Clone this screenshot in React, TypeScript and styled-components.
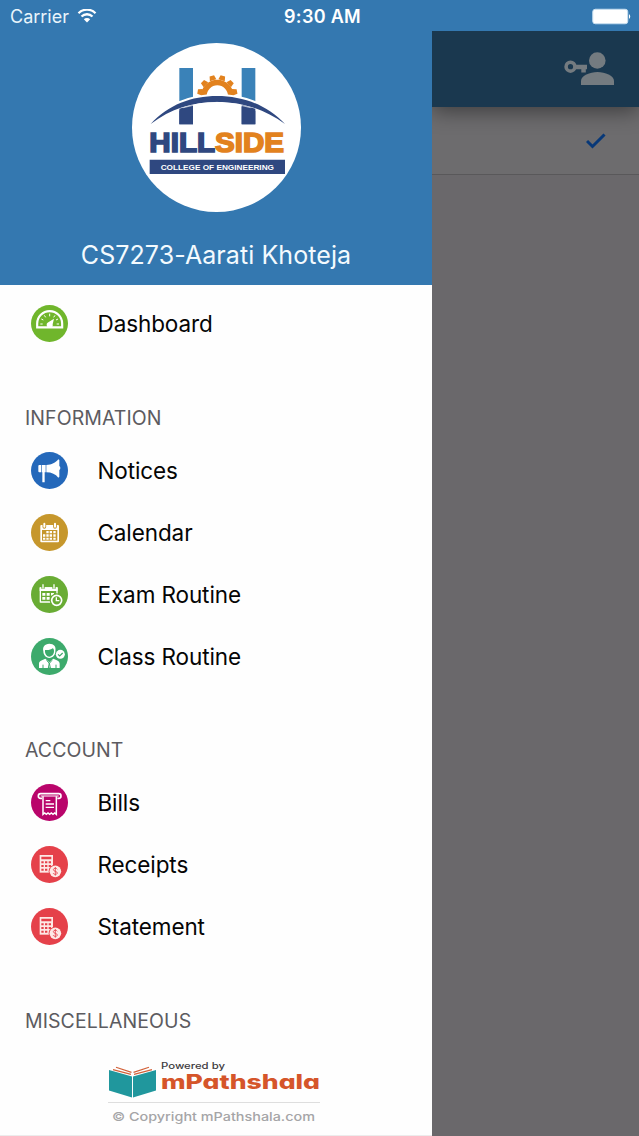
import type { ReactNode } from "react";
import styled, { createGlobalStyle } from "styled-components";

const GlobalStyle = createGlobalStyle`
  * {
    box-sizing: border-box;
  }
  body {
    margin: 0;
    font-family: Inter, "Liberation Sans", sans-serif;
    background-color: #6b696c;
  }
`;

const Screen = styled.div`
  width: 639px;
  height: 1136px;
  display: flex;
  flex-direction: column;
  overflow: hidden;
`;

const StatusBar = styled.header`
  height: 31px;
  flex-shrink: 0;
  display: grid;
  grid-template-columns: 1fr auto 1fr;
  align-items: center;
  padding: 1px 7px 0 10px;
  color: white;
  background-color: #3478b0;
`;
const Carrier = styled.div`
  display: flex;
  align-items: center;
  gap: 8px;
  font-size: 18px;
  color: #e9f5fb;
`;
const Time = styled.div`
  padding-left: 3px;
  font-size: 18px;
  font-weight: 600;
  letter-spacing: 0.3px;
`;
const Battery = styled.svg`
  justify-self: end;
  display: block;
`;

const Body = styled.div`
  flex: 1;
  display: flex;
  min-height: 0;
`;

const Drawer = styled.aside`
  width: 432px;
  display: flex;
  flex-direction: column;
  background-color: #fefefe;
  border-bottom: 1px solid #ececec;
`;
const Profile = styled.div`
  height: 254px;
  flex-shrink: 0;
  display: flex;
  flex-direction: column;
  align-items: center;
  padding-top: 12px;
  background-color: #3478b0;
`;
const UserName = styled.h1`
  margin: 27px 0 0;
  font-size: 25px;
  line-height: 32px;
  font-weight: 400;
  letter-spacing: 0.08px;
  white-space: nowrap;
  color: #f3fafe;
`;

const Menu = styled.nav`
  padding-top: 8px;
`;
const SectionTitle = styled.h2`
  height: 84.7px;
  margin: 0;
  padding: 51px 0 0 25px;
  font-size: 19.5px;
  line-height: 24px;
  font-weight: 400;
  letter-spacing: 0.08px;
  color: #5c5b60;
`;
const Item = styled.div`
  height: 61.9px;
  display: flex;
  align-items: center;
  gap: 29.5px;
  padding-left: 31px;
`;
const Label = styled.span`
  font-size: 22.5px;
  letter-spacing: -0.1px;
  color: #050505;
`;
const Badge = styled.svg`
  width: 37px;
  height: 37px;
  flex-shrink: 0;
`;

const Footer = styled.footer`
  flex: 1;
  padding: 15px 0 0 108px;
`;

const Page = styled.main`
  flex: 1;
  display: flex;
  flex-direction: column;
  background-color: #6a686b;
`;
const Toolbar = styled.div`
  height: 76px;
  display: flex;
  justify-content: flex-end;
  padding: 20px 24px 0 0;
  background-color: #1a384f;
  box-shadow: 0 4px 20px rgba(0, 0, 0, 0.45);
  clip-path: inset(0 0 -40px 0);
  z-index: 1;
`;
const SelectedRow = styled.div`
  height: 68px;
  display: flex;
  justify-content: flex-end;
  align-items: center;
  padding-right: 33px;
  background-color: #6d6c6e;
  border-bottom: 1px solid #59585a;
`;

interface IIcon {
  color: string;
  children: ReactNode;
}

function Icon({ color, children }: IIcon) {
  return (
    <Badge viewBox="0 0 111 111">
      <circle cx="55.5" cy="55.5" r="55.5" fill={color} />
      {children}
    </Badge>
  );
}

const DashboardIcon = () => (
  <Icon color="#70b62c">
    <path
      d="M18.500 67V56a37.500 37.500 0 0 1 75 0v11z"
      fill="none"
      stroke="#fff"
      strokeWidth="6.500"
    />
    <path
      d="M28 57h7M77 57h7M31 42l6 3M81 42l-6 3M40 31l4 6M72 31l-4 6M56 26v8"
      stroke="#fff"
      strokeWidth="3"
    />
    <path d="M69 41l-4 17a9 9 0 1 1-13-6z" fill="#fff" />
  </Icon>
);

const NoticesIcon = () => (
  <Icon color="#2468ba">
    <path
      d="M22 42q0-3 3-3h6v22h-6q-3 0-3-3zM33 39h11v22h-3v30h-7V61h-1zM46 39c16 0 28-7 36-17l3 2v18q3 2 3 6t-3 6v20l-3 3C74 67 62 61 46 61z"
      fill="#fff"
    />
  </Icon>
);

const CalendarIcon = () => (
  <Icon color="#c6972c">
    <path
      d="M31 33h50q3 0 3 3v46q0 3-3 3H31q-3 0-3-3V36q0-3 3-3z"
      fill="#fff"
    />
    <path d="M33 48h46v32H33z" fill="#c6972c" />
    <path
      d="M46 51h7v7h-7zM56 51h7v7h-7zM67 51h7v7h-7zM36 61h7v7h-7zM46 61h7v7h-7zM56 61h7v7h-7zM67 61h7v7h-7zM36 71h7v6h-7zM46 71h7v6h-7zM56 71h7v6h-7zM67 71h7v6h-7z"
      fill="#fff"
    />
    <path
      d="M40 30v9M72 30v9"
      stroke="#c6972c"
      strokeWidth="11"
      strokeLinecap="round"
    />
    <path
      d="M40 29v9M72 29v9"
      stroke="#fff"
      strokeWidth="6"
      strokeLinecap="round"
    />
  </Icon>
);

const ExamIcon = () => (
  <Icon color="#69ac34">
    <path
      d="M28 36h50v42H28z"
      fill="none"
      stroke="#fff"
      strokeWidth="4"
      strokeLinejoin="round"
    />
    <path
      d="M26 34h54v11H26zM34 51h9v8h-9zM47 51h9v8h-9zM60 51h9v8h-9zM34 63h9v8h-9zM47 63h9v8h-9z"
      fill="#fff"
    />
    <path d="M36 26v12M69 26v12" stroke="#69ac34" strokeWidth="10" />
    <path
      d="M36 26v10M69 26v10"
      stroke="#fff"
      strokeWidth="4"
      strokeLinecap="round"
    />
    <circle cx="77" cy="73" r="21" fill="#69ac34" />
    <circle
      cx="77"
      cy="73"
      r="15"
      fill="none"
      stroke="#fff"
      strokeWidth="5"
    />
    <path d="M76 64v10h9" fill="none" stroke="#fff" strokeWidth="4" />
  </Icon>
);

const ClassIcon = () => (
  <Icon color="#3daa6c">
    <path
      d="M37 40c-3-14 4-22 18-23 14 0 21 9 18 22 1 10-7 21-18 21S37 50 37 40z"
      fill="#fff"
    />
    <path
      d="M42 36c11 1 18-1 23-5 4 2 4 6 4 9 0 8-6 16-14 16s-14-8-13-20z"
      fill="#3daa6c"
    />
    <path
      d="M24 90V77c0-9 10-11 19-15l12 11 12-11c10 4 19 6 19 15v13z"
      fill="#fff"
    />
    <path
      d="M47 67l8 9 8-9M55 75l-3 15h6zM36 80v11M75 80v11"
      fill="none"
      stroke="#3daa6c"
      strokeWidth="3"
    />
    <circle cx="88" cy="49" r="13.5" fill="#fff" />
    <path
      d="M81 49l5 5 9-9"
      fill="none"
      stroke="#3daa6c"
      strokeWidth="3.5"
    />
  </Icon>
);

const BillsIcon = () => (
  <Icon color="#b9056b">
    <path
      d="M33 43h-4a7 7 0 0 1 0-14h54a7 7 0 0 1 0 14h-4"
      fill="none"
      stroke="#fff"
      strokeWidth="5"
    />
    <path d="M29 36h54" stroke="#fff" strokeWidth="3" />
    <path
      d="M36 37v54l5-4 5 4 5-4 5 4 5-4 5 4 5-4 5 4V37"
      fill="none"
      stroke="#fff"
      strokeWidth="4.5"
    />
    <path d="M44 50h14M44 60h25M44 70h25" stroke="#fff" strokeWidth="4" />
  </Icon>
);

const CalculatorIcon = () => (
  <Icon color="#e5414a">
    <path d="M26 27h40v53H26z" fill="#fde9e6" />
    <path
      d="M31 32h30v8H31zM31 46h7v6h-7zM42 46h7v6h-7zM53 46h7v6h-7zM31 57h7v6h-7zM42 57h7v6h-7zM53 57h7v6h-7zM31 68h7v6h-7zM42 68h7v6h-7z"
      fill="#e5414a"
    />
    <circle cx="73" cy="76" r="20" fill="#e5414a" />
    <circle cx="73" cy="76" r="17.500" fill="#fde9e6" />
    <path
      d="M79 70c-2-5-12-4-12 1 0 6 12 4 12 10 0 5-10 6-13 0M73 63v26"
      fill="none"
      stroke="#e5414a"
      strokeWidth="2.500"
    />
  </Icon>
);

const sections = [
  {
    title: "",
    items: [{ label: "Dashboard", icon: <DashboardIcon /> }],
  },
  {
    title: "INFORMATION",
    items: [
      { label: "Notices", icon: <NoticesIcon /> },
      { label: "Calendar", icon: <CalendarIcon /> },
      { label: "Exam Routine", icon: <ExamIcon /> },
      { label: "Class Routine", icon: <ClassIcon /> },
    ],
  },
  {
    title: "ACCOUNT",
    items: [
      { label: "Bills", icon: <BillsIcon /> },
      { label: "Receipts", icon: <CalculatorIcon /> },
      { label: "Statement", icon: <CalculatorIcon /> },
    ],
  },
  { title: "MISCELLANEOUS", items: [] },
];

function CollegeLogo() {
  const teeth = [-80, -48, -16, 16, 48, 80];
  return (
    <svg width="169" height="169" viewBox="36 24 507 507">
      <circle cx="289.5" cy="277.5" r="253.5" fill="#fff" />
      <path d="M178 99h41v100h-41zM365 99h41v100h-41z" fill="#3a82b8" />
      <path d="M178 205h41v63h-41zM365 205h41v63h-41z" fill="#2f4880" />
      {teeth.map((deg) => (
        <path
          key={deg}
          d="M282 134l3-14h14l3 14z"
          fill="#e2821e"
          transform={`rotate(${deg} 292 180)`}
        />
      ))}
      <path d="M243 183a49 49 0 0 1 98 0h-17a32 32 0 0 0-64 0z" fill="#e2821e" />
      <path
        d="M92 267C145 209 215 183 291 183s150 26 204 84C430 221 365 201 291 201S153 221 92 267z"
        fill="#2f4880"
        stroke="#fff"
        strokeWidth="12"
        paintOrder="stroke"
      />
      <path d="M178 221l41-12v59h-41zM365 209l41 12v47h-41z" fill="#2f4880" />
      <path
        d="M190 218q50-16 101-16t101 16"
        fill="none"
        stroke="#fff"
        strokeWidth="2"
      />
      <text
        x="88"
        y="350"
        fontFamily="Liberation Sans, sans-serif"
        fontSize="83"
        fontWeight="700"
        textLength="404"
        lengthAdjust="spacingAndGlyphs"
        fill="#2f4880"
        stroke="#2f4880"
        strokeWidth="5"
      >
        HILL
        <tspan fill="#e2821e" stroke="#e2821e">
          SIDE
        </tspan>
      </text>
      <path d="M89 374h406v43H89z" fill="#2f4880" />
      <text
        x="122"
        y="405"
        fontFamily="Liberation Sans, sans-serif"
        fontSize="24"
        fontWeight="700"
        textLength="340"
        lengthAdjust="spacingAndGlyphs"
        fill="#fff"
      >
        COLLEGE OF ENGINEERING
      </text>
    </svg>
  );
}

function PoweredBy() {
  return (
    <svg width="216" height="68" viewBox="108 1056.500 216 68">
      <path d="M109 1069.500l23 6.500v21l-23-7zM156 1069.500l-23 6.500v21l23-7z" fill="#20979d" />
      <path
        d="M113 1069.200l18 4.600M116 1066.700l15.500 5.200M152 1069.200l-18 4.600M149 1066.700l-15.500 5.200"
        stroke="#d2623a"
        strokeWidth="1.200"
      />
      <text
        x="161"
        y="1068.800"
        fontFamily="Inter, sans-serif"
        fontSize="8.800"
        fontWeight="500"
        textLength="64"
        lengthAdjust="spacingAndGlyphs"
        fill="#3d3b40"
      >
        Powered by
      </text>
      <text
        x="161"
        y="1088.800"
        fontFamily="Inter, sans-serif"
        fontSize="20"
        fontWeight="800"
        textLength="159"
        lengthAdjust="spacingAndGlyphs"
        fill="#d5552a"
        style={{ fontFeatureSettings: '"cv11"' }}
      >
        mPathshala
      </text>
      <path d="M108 1102h212" stroke="#dedede" />
      <text
        x="112"
        y="1120"
        fontFamily="Inter, sans-serif"
        fontSize="12"
        fontWeight="500"
        textLength="203"
        lengthAdjust="spacingAndGlyphs"
        fill="#a5a5a7"
      >
        © Copyright mPathshala.com
      </text>
    </svg>
  );
}

function App() {
  return (
    <Screen>
      <GlobalStyle />
      <StatusBar>
        <Carrier>
          Carrier
          <svg width="20" height="15" viewBox="0 0 20 15">
            <path
              d="M1.500 4.200a12 12 0 0 1 17 0M4.500 7.500a7.800 7.800 0 0 1 11 0"
              fill="none"
              stroke="#fff"
              strokeWidth="2.300"
            />
            <path d="M10 13.500l-3.200-3.300a4.600 4.600 0 0 1 6.400 0z" fill="#fff" />
          </svg>
        </Carrier>
        <Time>9:30 AM</Time>
        <Battery width="40" height="17" viewBox="0 0 40 17">
          <rect x="0.750" y="1.250" width="35" height="14.500" rx="2.500" fill="#fff" stroke="#c6def0" />
          <path d="M37 6q2.500 2.500 0 5z" fill="#fff" />
        </Battery>
      </StatusBar>
      <Body>
        <Drawer>
          <Profile>
            <CollegeLogo />
            <UserName>CS7273-Aarati Khoteja</UserName>
          </Profile>
          <Menu>
            {sections.map(({ title, items }) => (
              <div key={title}>
                {title && <SectionTitle>{title}</SectionTitle>}
                {items.map(({ label, icon }) => (
                  <Item key={label}>
                    {icon}
                    <Label>{label}</Label>
                  </Item>
                ))}
              </div>
            ))}
          </Menu>
          <Footer>
            <PoweredBy />
          </Footer>
        </Drawer>
        <Page>
          <Toolbar>
            <svg width="51" height="35" viewBox="0 0 51 35">
              <g fill="#747b80">
                <circle cx="33.300" cy="9.500" r="8.300" />
                <path d="M17 34v-4c0-5.500 9-9 16.500-9S50 24.500 50 30v4z" />
                <path d="M10.500 13.800H23v4.500h-1.200v3.300h-4.500v-3.300h-6.800z" />
              </g>
              <circle cx="6.500" cy="15.700" r="4.400" fill="none" stroke="#747b80" strokeWidth="3.600" />
            </svg>
          </Toolbar>
          <SelectedRow>
            <svg width="20" height="16" viewBox="0 0 20 16">
              <path
                d="M1 8l5.500 5.500L18.500 1.500"
                fill="none"
                stroke="#073878"
                strokeWidth="3"
              />
            </svg>
          </SelectedRow>
        </Page>
      </Body>
    </Screen>
  );
}

export default App;
